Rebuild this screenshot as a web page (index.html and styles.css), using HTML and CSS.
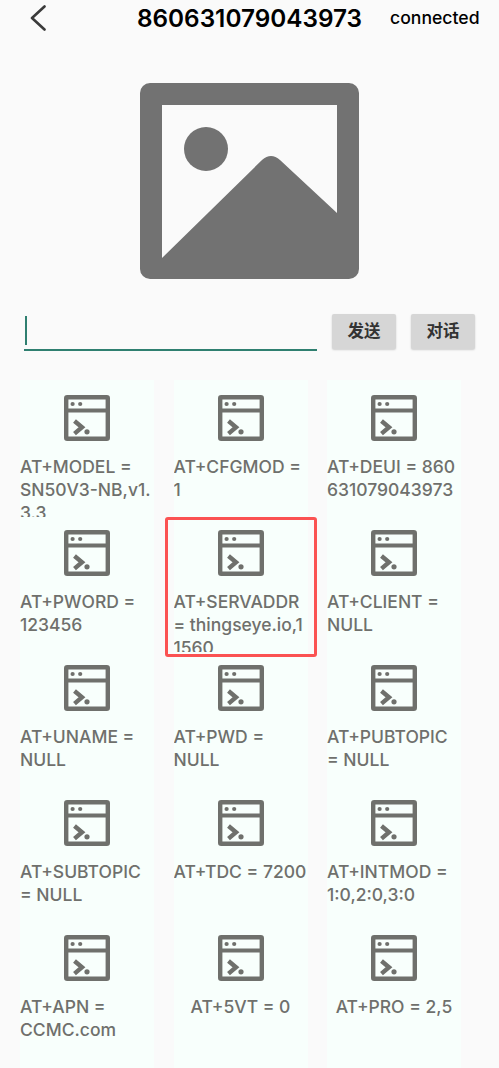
FILE: index.html
```html
<!DOCTYPE html>
<html lang="zh">
<head>
<meta charset="utf-8">
<title>860631079043973</title>
<link rel="stylesheet" href="styles.css">
</head>
<body>
<svg class="defs" width="0" height="0" aria-hidden="true">
  <symbol id="term" viewBox="0 0 46 46">
    <rect x="2.2" y="2.2" width="41.6" height="41.6" rx="1" fill="none" stroke="currentColor" stroke-width="4.4"/>
    <path d="M2 15.5H44" fill="none" stroke="currentColor" stroke-width="4"/>
    <circle cx="8.6" cy="9" r="2.1" fill="currentColor"/>
    <circle cx="16.2" cy="9" r="2.1" fill="currentColor"/>
    <path d="M10.5 26L18 32.3L10.5 38.6" fill="none" stroke="currentColor" stroke-width="4.4"/>
    <circle cx="23" cy="36.8" r="2.6" fill="currentColor"/>
  </symbol>
</svg>
<header class="topbar">
  <svg class="back" viewBox="0 0 16 26" width="16" height="26"><path d="M14.5 1.5L2 13L14.5 24.5" fill="none" stroke="currentColor" stroke-width="2.6" stroke-linecap="round" stroke-linejoin="round"/></svg>
  <h1 class="title">860631079043973</h1>
  <span class="status">connected</span>
</header>
<div class="hero">
  <svg class="placeholder" viewBox="0 0 219 196" width="219" height="196">
    <path fill-rule="evenodd" fill="#727272" d="M10 0H209A10 10 0 0 1 219 10V186A10 10 0 0 1 209 196H10A10 10 0 0 1 0 186V10A10 10 0 0 1 10 0ZM22 22V175L122 77Q131 69 140 77L197 130V22Z"/>
    <circle cx="66" cy="66" r="22" fill="#727272"/>
  </svg>
</div>
<form class="composer">
  <div class="field"><span class="caret"></span></div>
  <button class="btn" type="button">发送</button>
  <button class="btn" type="button">对话</button>
</form>
<main class="grid">
  <div class="cell"><svg class="icon"><use href="#term"/></svg><p class="label">AT+MODEL =<br>SN50V3-NB,v1.<br>3.3</p></div>
  <div class="cell"><svg class="icon"><use href="#term"/></svg><p class="label">AT+CFGMOD =<br>1</p></div>
  <div class="cell"><svg class="icon"><use href="#term"/></svg><p class="label">AT+DEUI = 860<br>631079043973</p></div>
  <div class="cell"><svg class="icon"><use href="#term"/></svg><p class="label">AT+PWORD =<br>123456</p></div>
  <div class="cell selected"><svg class="icon"><use href="#term"/></svg><p class="label">AT+SERVADDR<br>= thingseye.io,1<br>1560</p></div>
  <div class="cell"><svg class="icon"><use href="#term"/></svg><p class="label">AT+CLIENT =<br>NULL</p></div>
  <div class="cell"><svg class="icon"><use href="#term"/></svg><p class="label">AT+UNAME =<br>NULL</p></div>
  <div class="cell"><svg class="icon"><use href="#term"/></svg><p class="label">AT+PWD =<br>NULL</p></div>
  <div class="cell"><svg class="icon"><use href="#term"/></svg><p class="label">AT+PUBTOPIC<br>= NULL</p></div>
  <div class="cell"><svg class="icon"><use href="#term"/></svg><p class="label">AT+SUBTOPIC<br>= NULL</p></div>
  <div class="cell"><svg class="icon"><use href="#term"/></svg><p class="label">AT+TDC = 7200</p></div>
  <div class="cell"><svg class="icon"><use href="#term"/></svg><p class="label">AT+INTMOD =<br>1:0,2:0,3:0</p></div>
  <div class="cell"><svg class="icon"><use href="#term"/></svg><p class="label">AT+APN =<br>CCMC.com</p></div>
  <div class="cell"><svg class="icon"><use href="#term"/></svg><p class="label center">AT+5VT = 0</p></div>
  <div class="cell"><svg class="icon"><use href="#term"/></svg><p class="label center">AT+PRO = 2,5</p></div>
  <div class="cell"></div>
  <div class="cell"></div>
  <div class="cell"></div>
</main>
</body>
</html>
```
FILE: styles.css
```css
html, body {
  margin: 0;
  height: 1068px;
  overflow: hidden;
  background: #fafafa;
  font-family: "Inter", "Noto Sans CJK SC", sans-serif;
}
.defs { display: block; height: 0; }
.topbar {
  display: flex;
  align-items: center;
  height: 36px;
  padding-left: 30px;
  color: #000;
}
.back { color: #3a3a3a; flex: none; }
.title {
  margin: 0 0 0 91px;
  font-size: 24.3px;
  font-weight: 600;
  line-height: 36px;
  white-space: nowrap;
}
.status {
  margin: 0 0 2px 28px;
  font-size: 17.6px;
  font-weight: 500;
  white-space: nowrap;
}
.hero {
  display: flex;
  justify-content: center;
  padding-top: 47px;
  box-sizing: border-box;
  height: 278px;
}
.placeholder { display: block; }
.composer {
  display: flex;
  align-items: flex-start;
  height: 68px;
  padding-left: 24px;
}
.field {
  width: 293px;
  height: 37px;
  box-sizing: border-box;
  border-bottom: 2px solid #2f7f70;
  padding-top: 2px;
  margin-right: 15px;
}
.caret { display: block; width: 2px; height: 29px; margin-left: 1px; background: #2f7f70; }
.btn {
  width: 64px;
  height: 35px;
  margin: 0 15px 0 0;
  padding: 0 0 3px;
  border: 0;
  border-radius: 2px;
  background: #d6d6d6;
  box-shadow: 0 1px 2px rgba(0, 0, 0, 0.18);
  color: #333;
  font: 700 16.5px "Noto Sans CJK SC", sans-serif;
}
.grid {
  display: grid;
  grid-template-columns: repeat(3, 134px);
  grid-template-rows: repeat(5, 135px) 11px;
  column-gap: 19.5px;
  padding-left: 20px;
}
.cell {
  padding-top: 13px;
  box-sizing: border-box;
  background: #f8fffc;
  overflow: hidden;
  color: #6f706c;
}
.cell:nth-child(-n+3) { box-shadow: 0 -2px 0 #f8fffc; }
.selected { position: relative; z-index: 1; overflow: visible; }
.selected::after {
  content: "";
  position: absolute;
  left: -9px;
  right: -9px;
  top: 0;
  height: 140px;
  box-sizing: border-box;
  border: 3px solid #fb5252;
  border-radius: 3px;
}
.icon { display: block; width: 46px; height: 46px; margin: 0 auto; }
.label {
  margin: 14px 0 0;
  font-size: 17.5px;
  font-weight: 500;
  line-height: 23px;
  height: 62px;
  overflow: hidden;
  white-space: nowrap;
}
.center { text-align: center; }
```
